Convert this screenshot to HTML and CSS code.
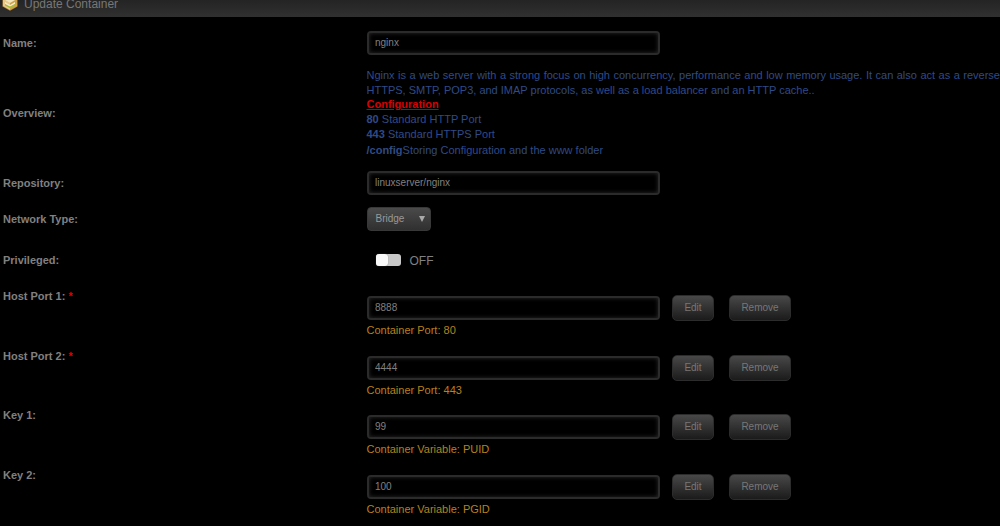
FILE: index.html
```
<!DOCTYPE html>
<html lang="en">
<head>
    <meta charset="UTF-8">
    <title>Update Container</title>
    <link rel="stylesheet" href="styles.css">
</head>
<body>
    <div class="title">
        <svg class="title-icon" width="16" height="16" viewBox="0 0 16 16">
            <path d="M0.5 4L8 0.5L15.500 4V11.500L8 15.800L0.500 11.500Z" fill="#b98a38"/>
            <path d="M1 4L8 7.500V15L1 11Z" fill="#e9c985"/>
            <path d="M15 4L8 7.500V15L15 11Z" fill="#d0a048"/>
            <path d="M1 4L8 1L15 4L8 8Z" fill="#f3e7bd"/>
            <path d="M3 7L8 10L13 7V9L8 12L3 9Z" fill="#f4ecd0"/>
            <path d="M3 9L8 11.500L13 9V10.500L8 13.300L3 10.500Z" fill="#a4bb3a"/>
        </svg>
        <span>Update Container</span>
    </div>

    <form class="settings">
        <div class="row name">
            <label>Name:</label>
            <input type="text" value="nginx">
        </div>
        <div class="row overview">
            <label>Overview:</label>
            <div class="description">
                <div class="first">Nginx is a web server with a strong focus on high concurrency, performance and low memory usage. It can also act as a reverse</div>
                <div class="second">HTTPS, SMTP, POP3, and IMAP protocols, as well as a load balancer and an HTTP cache..</div>
                <div class="second"><b class="config">Configuration</b></div>
                <div><b>80</b> Standard HTTP Port</div>
                <div><b>443</b> Standard HTTPS Port</div>
                <div><b>/config</b>Storing Configuration and the www folder</div>
            </div>
        </div>
        <div class="row repository">
            <label>Repository:</label>
            <input type="text" value="linuxserver/nginx">
        </div>
        <div class="row network">
            <label>Network Type:</label>
            <div class="select">
                <span>Bridge</span>
                <svg width="6" height="6" viewBox="0 0 6 6"><path d="M0 0H6L3 6Z" fill="#aaa"/></svg>
            </div>
        </div>
        <div class="row privileged">
            <label>Privileged:</label>
            <div class="switch">
                <span class="track"><span class="knob"></span></span>
                <span class="state">OFF</span>
            </div>
        </div>

        <div class="row port">
            <label>Host Port 1: <span class="required">*</span></label>
            <div class="field">
                <div class="controls">
                    <input type="text" value="8888">
                    <button type="button" class="edit">Edit</button>
                    <button type="button" class="remove">Remove</button>
                </div>
                <div class="hint">Container Port: 80</div>
            </div>
        </div>
        <div class="row port">
            <label>Host Port 2: <span class="required">*</span></label>
            <div class="field">
                <div class="controls">
                    <input type="text" value="4444">
                    <button type="button" class="edit">Edit</button>
                    <button type="button" class="remove">Remove</button>
                </div>
                <div class="hint">Container Port: 443</div>
            </div>
        </div>
        <div class="row port">
            <label>Key 1:</label>
            <div class="field">
                <div class="controls">
                    <input type="text" value="99">
                    <button type="button" class="edit">Edit</button>
                    <button type="button" class="remove">Remove</button>
                </div>
                <div class="hint">Container Variable: PUID</div>
            </div>
        </div>
        <div class="row port">
            <label>Key 2:</label>
            <div class="field">
                <div class="controls">
                    <input type="text" value="100">
                    <button type="button" class="edit">Edit</button>
                    <button type="button" class="remove">Remove</button>
                </div>
                <div class="hint">Container Variable: PGID</div>
            </div>
        </div>
    </form>
</body>
</html>
```
FILE: styles.css
```
* {
    box-sizing: border-box;
}
body {
    margin: 0;
    height: 526px;
    overflow: hidden;
    background: #000;
    color: #808080;
    font-family: "Liberation Sans", Arial, sans-serif;
    font-size: 11px;
}
.title {
    display: flex;
    height: 17px;
    padding-left: 2px;
    background: linear-gradient(#242424, #303030);
    font-size: 12px;
    line-height: 14px;
}
.title span {
    margin-top: -3px;
    color: #777;
}
.title-icon {
    margin: -5px 6px 0 0;
}
.row {
    display: grid;
    grid-template-columns: 363.5px 1fr;
    align-items: center;
    padding-left: 3px;
}
.name {
    height: 51px;
    padding-top: 1px;
}
.overview {
    height: 88px;
}
.repository {
    height: 51px;
    padding-top: 3px;
}
.network {
    height: 24px;
}
.privileged {
    height: 58px;
}
.port {
    height: 59.7px;
    align-items: start;
}
label {
    font-weight: bold;
    line-height: 15px;
}
.required {
    color: #e00000;
}
input {
    width: 293.5px;
    height: 24px;
    padding: 0 6.5px 1px;
    border: 2px solid #2b2b2b;
    border-radius: 4px;
    background: #000;
    box-shadow: inset 0 0 4px #2b2b2b;
    color: #808080;
    font-family: inherit;
    font-size: 10px;
    outline: none;
}
.description {
    color: #2f4b87;
    line-height: 15.500px;
    white-space: nowrap;
}
.description .first,
.description .second {
    line-height: 14.500px;
}
.description .first {
    white-space: normal;
    text-align-last: justify;
}
.config {
    color: #d90000;
    text-decoration: underline;
    text-decoration-color: #2b3658;
}
.select {
    display: flex;
    align-items: center;
    justify-content: space-between;
    width: 64px;
    height: 24px;
    padding: 0 5px 1px 8px;
    border: 1px solid #383838;
    border-radius: 4px;
    background: linear-gradient(#4a4a4a, #303030);
    color: #999;
    font-size: 10px;
}
.switch {
    display: flex;
    align-items: center;
    padding-left: 9px;
}
.track {
    width: 25px;
    height: 12px;
    margin-right: 9px;
    border-radius: 3px;
    background: #c8c8c8;
}
.knob {
    display: block;
    width: 12px;
    height: 12px;
    border-radius: 3px;
    background: #f8f8f8;
    box-shadow: 0 0 1px #666;
}
.state {
    padding-top: 1px;
    font-size: 12px;
}
.controls {
    display: flex;
    align-items: center;
    height: 26px;
    margin-top: 6px;
}
button {
    height: 26px;
    padding: 0 0 1px;
    border: 1px solid #2c2c2c;
    border-radius: 5px;
    background: linear-gradient(#484848, #1b1b1b);
    color: #777;
    font-family: inherit;
    font-size: 10px;
}
.edit {
    width: 42px;
    margin-left: 12px;
}
.remove {
    width: 62px;
    margin-left: 15px;
}
.hint {
    margin-top: 2px;
    color: #b8801c;
    line-height: 14px;
}
```
